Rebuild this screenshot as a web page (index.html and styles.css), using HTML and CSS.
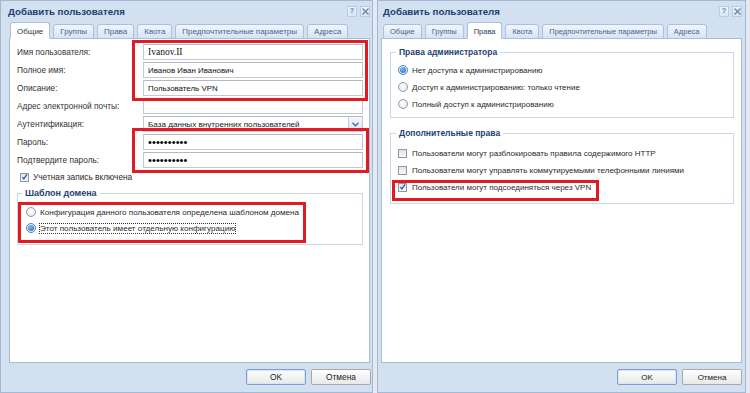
FILE: index.html
```html
<!DOCTYPE html>
<html lang="ru">
<head>
<meta charset="utf-8">
<title>Добавить пользователя</title>
<link rel="stylesheet" href="styles.css">
</head>
<body>
<div class="screen">
  <div class="dlg dlg-left">
    <div class="hdr">
      <span class="title">Добавить пользователя</span>
      <span class="tools"><span class="tool">?</span><span class="tool tool-x"><svg width="7" height="7" viewBox="0 0 7 7"><path d="M0.5 0.5L6.5 6.5M6.5 0.5L0.5 6.5" stroke="#6b87ad" stroke-width="1.4"/></svg></span></span>
    </div>
    <div class="tabs">
      <span class="tab active">Общие</span>
      <span class="tab">Группы</span>
      <span class="tab">Права</span>
      <span class="tab">Квота</span>
      <span class="tab">Предпочтительные параметры</span>
      <span class="tab">Адреса</span>
    </div>
    <div class="panel panel-form">
      <div class="row"><span class="lbl">Имя пользователя:</span><span class="inp inp-serif">Ivanov.II</span></div>
      <div class="row"><span class="lbl">Полное имя:</span><span class="inp">Иванов Иван Иванович</span></div>
      <div class="row"><span class="lbl">Описание:</span><span class="inp">Пользователь VPN</span></div>
      <div class="row"><span class="lbl">Адрес электронной почты:</span><span class="inp"></span></div>
      <div class="row"><span class="lbl">Аутентификация:</span><span class="inp sel"><span class="sel-text">База данных внутренних пользователей</span><span class="sel-btn"><svg width="7" height="5" viewBox="0 0 7 5"><path d="M0.5 0.8L3.5 3.8L6.5 0.8" fill="none" stroke="#4f6d99" stroke-width="1.4"/></svg></span></span></div>
      <div class="row"><span class="lbl">Пароль:</span><span class="inp pw">••••••••••</span></div>
      <div class="row"><span class="lbl">Подтвердите пароль:</span><span class="inp pw">••••••••••</span></div>
      <div class="opt opt-acc"><span class="cb on"><svg width="8" height="8" viewBox="0 0 8 8"><path d="M1.5 4L3.2 6.2L6.8 1" fill="none" stroke="#2b4f9e" stroke-width="1.3"/></svg></span><span>Учетная запись включена</span></div>
      <fieldset class="fs fs-domain">
        <legend>Шаблон домена</legend>
        <div class="opt"><span class="rb"></span><span>Конфигурация данного пользователя определена шаблоном домена</span></div>
        <div class="opt"><span class="rb on"></span><span class="focus">Этот пользователь имеет отдельную конфигурацию</span></div>
      </fieldset>
    </div>
    <div class="foot">
      <span class="btn btn-ok">OK</span>
      <span class="btn">Отмена</span>
    </div>
    <div class="mark mark-1"></div>
    <div class="mark mark-2"></div>
    <div class="mark mark-3"></div>
  </div>

  <div class="dlg dlg-right">
    <div class="hdr">
      <span class="title">Добавить пользователя</span>
      <span class="tools"><span class="tool">?</span><span class="tool tool-x"><svg width="7" height="7" viewBox="0 0 7 7"><path d="M0.5 0.5L6.5 6.5M6.5 0.5L0.5 6.5" stroke="#6b87ad" stroke-width="1.4"/></svg></span></span>
    </div>
    <div class="tabs">
      <span class="tab">Общие</span>
      <span class="tab">Группы</span>
      <span class="tab active">Права</span>
      <span class="tab">Квота</span>
      <span class="tab">Предпочтительные параметры</span>
      <span class="tab">Адреса</span>
    </div>
    <div class="panel panel-rights">
      <fieldset class="fs fs-admin">
        <legend>Права администратора</legend>
        <div class="opt"><span class="rb on"></span><span>Нет доступа к администрированию</span></div>
        <div class="opt"><span class="rb"></span><span>Доступ к администрированию: только чтение</span></div>
        <div class="opt"><span class="rb"></span><span>Полный доступ к администрированию</span></div>
      </fieldset>
      <fieldset class="fs fs-extra">
        <legend>Дополнительные права</legend>
        <div class="opt"><span class="cb"></span><span>Пользователи могут разблокировать правила содержимого HTTP</span></div>
        <div class="opt"><span class="cb"></span><span>Пользователи могут управлять коммутируемыми телефонными линиями</span></div>
        <div class="opt"><span class="cb on"><svg width="8" height="8" viewBox="0 0 8 8"><path d="M1.5 4L3.2 6.2L6.8 1" fill="none" stroke="#2b4f9e" stroke-width="1.3"/></svg></span><span>Пользователи могут подсоединяться через VPN</span></div>
      </fieldset>
    </div>
    <div class="foot">
      <span class="btn btn-ok">OK</span>
      <span class="btn">Отмена</span>
    </div>
    <div class="mark mark-4"></div>
  </div>
</div>
</body>
</html>
```

FILE: styles.css
```css
html, body {
  margin: 0;
  padding: 0;
}
body {
  background: #e6eaf0;
  font-family: "Liberation Sans", Arial, sans-serif;
  font-size: 9px;
  color: #2a2a2a;
  width: 750px;
  height: 393px;
  overflow: hidden;
}
.screen {
  display: flex;
  gap: 4px;
  height: 393px;
}
.dlg {
  position: relative;
  box-sizing: border-box;
  height: 393px;
  display: flex;
  flex-direction: column;
  background: #d3e0ef;
  border: 1px solid #a2b9d6;
}
.dlg-left {
  width: 373px;
  padding: 0 2px 0 8px;
  font-size: 8.3px;
}
.dlg-right {
  width: 369px;
  padding: 0 3px 0 3px;
  font-size: 8px;
}
.hdr {
  height: 20px;
  flex: none;
  display: flex;
  align-items: center;
  justify-content: space-between;
}
.dlg-left .hdr {
  margin-left: -1px;
}
.dlg-left .tools {
  margin-right: 0;
}
.dlg-right .hdr {
  padding-left: 2px;
  margin-right: -2px;
}
.title {
  font-weight: bold;
  color: #1d3f72;
  font-size: 9.7px;
}
.tools {
  display: flex;
  gap: 3px;
  margin-right: 2px;
}
.tool {
  width: 10px;
  height: 11px;
  box-sizing: border-box;
  border: 1px solid #b9cce5;
  background: linear-gradient(#eef4fb, #d8e5f4);
  display: flex;
  align-items: center;
  justify-content: center;
  color: #6b87ad;
  font-size: 8px;
  font-weight: bold;
  line-height: 1;
}
.tabs {
  height: 18px;
  margin-bottom: -1px;
  flex: none;
  display: flex;
  align-items: flex-end;
  gap: 3px;
  padding-left: 1px;
  position: relative;
  z-index: 1;
  font-size: 8px;
}
.dlg-right .tabs {
  padding-left: 2px;
  font-size: 7.5px;
}
.tab {
  height: 15px;
  box-sizing: border-box;
  padding: 0 6px;
  border: 1px solid #a9c1df;
  border-radius: 3px 3px 0 0;
  background: linear-gradient(#f1f5fb, #d8e4f3);
  color: #48658f;
  display: flex;
  align-items: center;
  white-space: nowrap;
}
.dlg-right .tab {
  padding: 0 6px;
}
.tab.active {
  height: 17px;
  background: #fff;
  border-bottom-color: #fff;
  color: #2b3d57;
  padding-top: 1px;
}
.panel {
  flex: 1;
  background: #fff;
  border: 1px solid #a5bddb;
  box-sizing: border-box;
}
.panel-form {
  padding: 5px 6px 0 7px;
}
.row {
  display: flex;
  align-items: center;
  height: 16px;
  margin-bottom: 2px;
}
.lbl {
  width: 126px;
  flex: none;
  color: #333;
}
.inp {
  flex: 1;
  height: 16px;
  box-sizing: border-box;
  border: 1px solid #c4c8d2;
  border-top-color: #b3b8c4;
  background: #fff;
  padding: 0 4px;
  display: flex;
  align-items: center;
  color: #111;
  white-space: nowrap;
  overflow: hidden;
  font-size: 7.9px;
}
.inp-serif {
  font-family: "Liberation Serif", "Times New Roman", serif;
  font-size: 9.5px;
}
.sel {
  padding-right: 0;
  justify-content: space-between;
  font-size: 8.1px;
}
.sel-text {
  color: #222;
}
.sel-btn {
  width: 13px;
  height: 14px;
  flex: none;
  border-left: 1px solid #c4cfde;
  background: linear-gradient(#f4f7fb, #dfe7f2);
  display: flex;
  align-items: center;
  justify-content: center;
}
.pw {
  font-size: 11px;
  color: #000;
  letter-spacing: 0.1px;
}
.opt {
  display: flex;
  align-items: center;
  gap: 4px;
  height: 14px;
  white-space: nowrap;
  color: #2a2a2a;
}
.opt-acc {
  padding-left: 3px;
}
.cb {
  width: 9px;
  height: 9px;
  box-sizing: border-box;
  border: 1px solid #8e99a8;
  background: linear-gradient(#dfe3e9, #f7f8fa);
  display: flex;
  align-items: center;
  justify-content: center;
  flex: none;
}
.cb svg {
  display: block;
}
.rb {
  width: 10px;
  height: 10px;
  box-sizing: border-box;
  border: 1px solid #8e99a8;
  border-radius: 50%;
  background: radial-gradient(circle at 50% 40%, #ffffff, #dfe3e9);
  flex: none;
  position: relative;
}
.rb.on {
  border-color: #4d7fbf;
}
.rb.on::after {
  content: "";
  position: absolute;
  left: 1px;
  top: 1px;
  width: 6px;
  height: 6px;
  border-radius: 50%;
  background: radial-gradient(circle at 40% 35%, #7fb8f5, #1f66c9);
}
.focus {
  outline: 1px dotted #333;
  outline-offset: 0;
}
.fs {
  margin: 0;
  border: 1px solid #cad7e7;
  min-width: 0;
}
.fs legend {
  font-weight: bold;
  color: #1d3f72;
  padding: 0 3px;
  height: 12px;
  line-height: 12px;
  font-size: 9px;
}
.fs-domain {
  margin-top: 3px;
  padding: 5px 8px 8px 8px;
}
.fs-domain legend {
  margin-left: -4px;
}
.fs-domain .opt {
  height: 16px;
  font-size: 8.1px;
}
.panel-rights {
  padding: 7px 7px 0 8px;
}
.fs-admin {
  padding: 5px 7px 6px 7px;
}
.fs-admin legend,
.fs-extra legend {
  margin-left: -2px;
  font-size: 8.5px;
}
.fs-admin .opt + .opt,
.fs-extra .opt + .opt {
  margin-top: 3px;
}
.fs-extra {
  margin-top: 9px;
  padding: 7px 7px 9px 7px;
}
.fs-extra .opt {
  gap: 5px;
}
.foot {
  height: 29px;
  flex: none;
  display: flex;
  justify-content: flex-end;
  align-items: flex-start;
  gap: 5px;
  padding-top: 6px;
  box-sizing: border-box;
  margin-right: -1px;
}
.dlg-right .foot {
  margin-right: 0;
}
.btn {
  width: 60px;
  height: 16px;
  box-sizing: border-box;
  border: 1px solid #a8a8a8;
  border-radius: 2px;
  background: linear-gradient(#fefefe, #e8e8e8);
  display: flex;
  align-items: center;
  justify-content: center;
  color: #222;
}
.btn-ok {
  border-color: #7d9fcf;
  box-shadow: inset 0 0 0 1px #d6e5f7;
}
.mark {
  position: absolute;
  box-sizing: border-box;
  border: 3px solid #e11b23;
  pointer-events: none;
  z-index: 5;
}
.mark-1 { left: 131px; top: 39px; width: 236px; height: 61px; }
.mark-2 { left: 131px; top: 127px; width: 237px; height: 45px; }
.mark-3 { left: 17px; top: 201px; width: 288px; height: 41px; }
.mark-4 { left: 14px; top: 179px; width: 207px; height: 21px; }
```
